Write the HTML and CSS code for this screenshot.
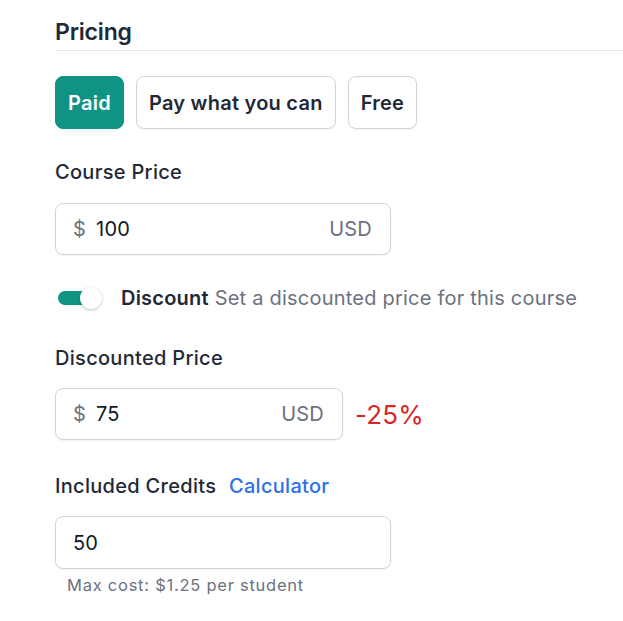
FILE: index.html
```html
<!DOCTYPE html>
<html>
<head>
<meta charset="utf-8">
<link rel="stylesheet" href="styles.css">
</head>
<body>
<section class="pricing">
  <h2 class="title">Pricing</h2>
  <div class="options">
    <button class="opt opt-active">Paid</button>
    <button class="opt">Pay what you can</button>
    <button class="opt">Free</button>
  </div>

  <label class="label label-course">Course Price</label>
  <div class="field field-wide">
    <span class="prefix">$</span>
    <span class="value">100</span>
    <span class="suffix">USD</span>
  </div>

  <div class="toggle-row">
    <span class="toggle"><span class="knob"></span></span>
    <span class="toggle-text"><strong>Discount</strong> <span class="muted">Set a discounted price for this course</span></span>
  </div>

  <label class="label label-discount">Discounted Price</label>
  <div class="field-row">
    <div class="field field-narrow">
      <span class="prefix">$</span>
      <span class="value">75</span>
      <span class="suffix">USD</span>
    </div>
    <span class="percent">-25%</span>
  </div>

  <div class="label label-credits">Included Credits <a class="link">Calculator</a></div>
  <div class="field field-wide field-credits">
    <span class="value value-plain">50</span>
  </div>
  <p class="help">Max cost: $1.25 per student</p>
</section>
</body>
</html>
```

FILE: styles.css
```css
html, body {
  margin: 0;
  padding: 0;
  background: #ffffff;
}
body {
  font-family: Inter, "Noto Sans", sans-serif;
  color: #1f2937;
}
.pricing {
  padding: 17px 0 0 55px;
  display: flex;
  flex-direction: column;
  align-items: flex-start;
}
.title {
  align-self: stretch;
  margin: 0;
  font-size: 23px;
  font-weight: 600;
  line-height: 30px;
  padding-bottom: 3px;
  border-bottom: 1px solid #e5e7eb;
  color: #1f2937;
  letter-spacing: -0.2px;
}
.options {
  display: flex;
  gap: 12px;
  margin-top: 25px;
}
.opt {
  font-family: inherit;
  font-size: 20px;
  font-weight: 600;
  letter-spacing: 0.25px;
  height: 53px;
  padding: 0 12px;
  border: 1px solid #d1d5db;
  border-radius: 8px;
  background: #ffffff;
  color: #1f2937;
  box-shadow: 0 1px 2px rgba(0,0,0,0.05);
}
.opt-active {
  background: #0f9484;
  border-color: #0f9484;
  color: #ffffff;
}
.label {
  font-size: 20px;
  font-weight: 500;
  line-height: 24px;
  color: #1f2937;
  letter-spacing: 0.3px;
}
.label-course { margin-top: 31px; }
.label-discount { margin-top: 36px; }
.label-credits { margin-top: 34px; }
.link {
  color: #2f6fe8;
  margin-left: 7px;
}
.field {
  margin-top: 19px;
  height: 52px;
  box-sizing: border-box;
  border: 1px solid #d1d5db;
  border-radius: 8px;
  display: flex;
  align-items: center;
  padding: 0 18px 0 17px;
  font-size: 20px;
  letter-spacing: 0.2px;
  box-shadow: 0 1px 2px rgba(0,0,0,0.06);
}
.field-wide { width: 336px; }
.field-narrow { width: 288px; margin-top: 0; }
.field-credits {
  margin-top: 18px;
  height: 53px;
}
.prefix {
  color: #6b7280;
  margin-right: 10px;
}
.value {
  color: #111827;
  flex: 1;
}
.suffix {
  color: #6b7280;
}
.field-row {
  margin-top: 18px;
  display: flex;
  align-items: center;
  gap: 12px;
}
.percent {
  color: #dc2626;
  font-size: 26px;
  letter-spacing: 0.2px;
}
.toggle-row {
  margin-top: 31px;
  display: flex;
  align-items: center;
  height: 24px;
}
.toggle {
  position: relative;
  width: 42px;
  height: 14px;
  margin-left: 3px;
  background: #0f9484;
  border-radius: 7px;
}
.knob {
  position: absolute;
  right: -2px;
  top: -4px;
  width: 22px;
  height: 22px;
  border-radius: 50%;
  background: #ffffff;
  box-shadow: 0 1px 3px rgba(0,0,0,0.25);
}
.toggle-text {
  margin-left: 21px;
  font-size: 20px;
  letter-spacing: 0.22px;
}
.toggle-text strong {
  font-weight: 600;
  color: #1f2937;
}
.muted {
  color: #6b7280;
}
.help {
  margin: 6px 0 0 12px;
  font-size: 16.5px;
  line-height: 20px;
  letter-spacing: 0.75px;
  color: #6b7280;
}
```
